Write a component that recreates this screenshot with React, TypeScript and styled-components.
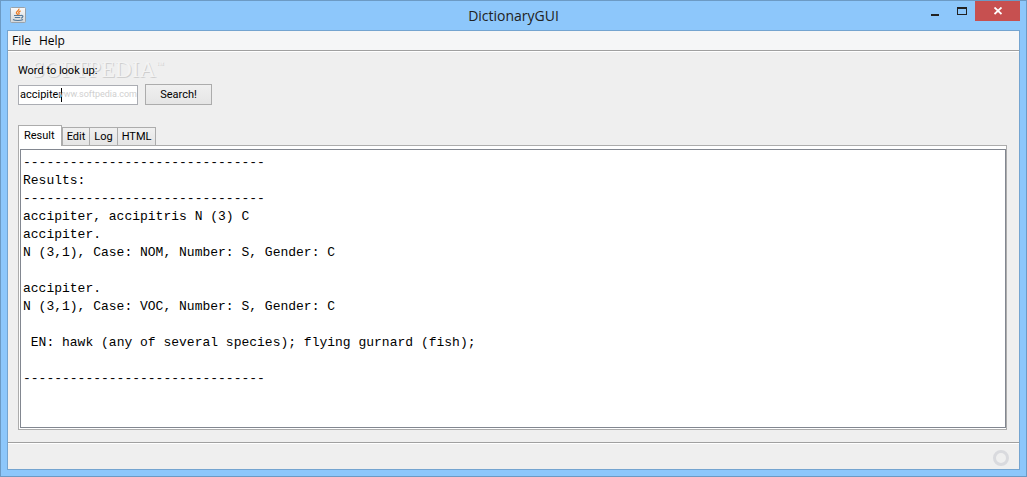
import React, { useState } from "react";
import styled, { createGlobalStyle } from "styled-components";

const titleFont = `"Open Sans", "Noto Sans", sans-serif`;
const controlFont = `Roboto, "Noto Sans", sans-serif`;

const GlobalStyle = createGlobalStyle`
  * { box-sizing: border-box; }
  body { margin: 0; background: #8dc7fb; }
  button, input, textarea { font: inherit; color: inherit; margin: 0; border-radius: 0; outline: none; }
`;

const Window = styled.div`
  display: flex;
  flex-direction: column;
  min-height: 100vh;
  padding: 0 6px 6px;
  border: 1px solid #6c9ac4;
  background: #8dc7fb;
  font: 11px/14px ${controlFont};
  color: #000;
`;

const TitleBar = styled.header`
  display: grid;
  grid-template-columns: 1fr auto 1fr;
  height: 29px;
`;

const AppIcon = styled.svg`
  width: 16px;
  height: 16px;
  margin: 6px 3px;
`;

const Title = styled.h1`
  margin: 0;
  font: 14px/29px ${titleFont};
  color: #222;
`;

const WindowControls = styled.div`
  display: flex;
  justify-content: flex-end;
  align-items: flex-start;
`;

const ControlButton = styled.button<{ $close?: boolean }>`
  display: flex;
  width: ${(p) => (p.$close ? 45 : 27)}px;
  height: 20px;
  padding: 0;
  border: 0;
  align-items: center;
  justify-content: center;
  background: ${(p) => (p.$close ? "#c75050" : "transparent")};
`;

const Frame = styled.div`
  display: flex;
  flex: 1;
  flex-direction: column;
  border: 1px solid #74a4d0;
  background: #efefef;
`;

const MenuBar = styled.nav`
  display: flex;
  gap: 8px;
  height: 20px;
  padding: 0 4px;
  background: #f5f6f7;
  border-bottom: 1px solid #a0a0a0;
  box-shadow: 0 1px #fff;
`;

const MenuItem = styled.button`
  padding: 0;
  border: 0;
  background: none;
  font: 12px/19px ${titleFont};
`;

const Main = styled.main`
  display: flex;
  flex: 1;
  flex-direction: column;
  padding: 13px 12px 12px 10px;
`;

const SearchForm = styled.form`
  position: relative;
  display: flex;
  flex-direction: column;
  align-items: flex-start;
  gap: 6px;
  margin-bottom: 20px;
`;

const FieldLabel = styled.label`
  position: relative;
  z-index: 1;
`;

const SearchRow = styled.div`
  display: flex;
  align-items: center;
  gap: 7px;
`;

const Field = styled.div`
  position: relative;
`;

const WordInput = styled.input`
  display: block;
  width: 120px;
  height: 20px;
  padding: 0 1px;
  border: 1px solid #abadb3;
  background: #fff;
`;

const Caret = styled.span`
  position: absolute;
  top: 3px;
  left: 43px;
  width: 1px;
  height: 14px;
  background: #000;
`;

const SearchButton = styled.button`
  width: 67px;
  height: 21px;
  padding: 0;
  border: 1px solid #acacac;
  background: linear-gradient(#f0f0f0, #e5e5e5);
`;

const Watermark = styled.div`
  position: absolute;
  top: -7px;
  left: 14px;
  font: 23px/26px "Liberation Serif", serif;
  color: #f3f3f3;
  text-shadow: 1px 1px #cfcfcf;
  pointer-events: none;
  white-space: nowrap;

  sup {
    font-size: 8px;
    line-height: 0;
    vertical-align: 10px;
  }
`;

const WatermarkUrl = styled.span`
  position: absolute;
  top: 3px;
  right: 1px;
  font: 9px/13px ${controlFont};
  color: #d0d0d0;
  pointer-events: none;
`;

const TabList = styled.div`
  display: flex;
  align-items: flex-end;
`;

const Tab = styled.button<{ $selected: boolean }>`
  position: relative;
  height: ${(p) => (p.$selected ? 21 : 18)}px;
  padding: ${(p) => (p.$selected ? "0 6px 1px 5px" : "1px 4px 0")};
  border: 1px solid #acacac;
  border-bottom: 0;
  margin-right: ${(p) => (p.$selected ? 0 : -1)}px;
  background: ${(p) => (p.$selected ? "#fff" : "linear-gradient(#f0f0f0, #e5e5e5)")};
  ${(p) => p.$selected && "margin-bottom: -1px; z-index: 1;"}
`;

const TabPanel = styled.div`
  display: flex;
  flex: 1;
  padding: 3px 0 1px 1px;
  border: 1px solid #acacac;
  background: #fff;
`;

const Output = styled.textarea`
  flex: 1;
  min-height: 200px;
  padding: 4px 2px;
  border: 1px solid #828790;
  background: #fff;
  resize: none;
  overflow: hidden;
  font: 13px/18px "Liberation Mono", monospace;
`;

const StatusBar = styled.footer`
  display: flex;
  height: 27px;
  padding: 7px 10px 0;
  justify-content: flex-end;
  border-top: 1px solid #a0a0a0;
  box-shadow: inset 0 1px #fff;
`;

const BusyRing = styled.div`
  width: 16px;
  height: 16px;
  border: 3px solid #d9dade;
  border-radius: 50%;
`;

const rule = "-".repeat(31);
const resultText = [
  rule,
  "Results:",
  rule,
  "accipiter, accipitris N (3) C",
  "accipiter.",
  "N (3,1), Case: NOM, Number: S, Gender: C",
  "",
  "accipiter.",
  "N (3,1), Case: VOC, Number: S, Gender: C",
  "",
  " EN: hawk (any of several species); flying gurnard (fish);",
  "",
  rule,
].join("\n");

const tabs = ["Result", "Edit", "Log", "HTML"];

export default function App() {
  const [word, setWord] = useState("accipiter");
  const [active, setActive] = useState("Result");

  return (
    <>
      <GlobalStyle />
      <Window>
        <TitleBar>
          <AppIcon viewBox="0 0 16 16" aria-hidden="true">
            <defs>
              <linearGradient id="tile" x2="0" y2="1">
                <stop offset="0" stopColor="#fafafa" />
                <stop offset="1" stopColor="#d3d7da" />
              </linearGradient>
            </defs>
            <rect x=".5" y=".5" width="15" height="15" rx="1" fill="url(#tile)" stroke="#98a2ab" />
            <path d="M8.8 1.6C9.8 3.6 5.8 4.2 6.4 6L7.8 7.8M10.6 3.8C8.4 4.8 8.4 5.6 9.1 6.4L8.8 7.6" fill="none" stroke="#ec7a22" strokeWidth="1.3" />
            <path d="M4 8.5h7M4.8 10.5h5.4M11 8.5c2.8-.4 2.2 2.2 0 2.6M3 12.5c2 1.4 8 1.3 10 0" fill="none" stroke="#54799a" strokeWidth="1.2" />
          </AppIcon>
          <Title>DictionaryGUI</Title>
          <WindowControls>
            <ControlButton type="button" aria-label="Minimize">
              <svg width="10" height="10"><path d="M1 8h8v2H1z" fill="#222" /></svg>
            </ControlButton>
            <ControlButton type="button" aria-label="Maximize">
              <svg width="10" height="8"><path d="M0 0h10v8H0zM1 2v5h8V2z" fillRule="evenodd" fill="#222" /></svg>
            </ControlButton>
            <ControlButton type="button" $close aria-label="Close">
              <svg width="8" height="8"><path d="M.5 .5l7 6.5M7.5 .5l-7 6.5" stroke="#fff" strokeWidth="1.8" /></svg>
            </ControlButton>
          </WindowControls>
        </TitleBar>
        <Frame>
          <MenuBar>
            <MenuItem type="button">File</MenuItem>
            <MenuItem type="button">Help</MenuItem>
          </MenuBar>
          <Main>
            <SearchForm onSubmit={(e) => e.preventDefault()}>
              <FieldLabel htmlFor="word">Word to look up:</FieldLabel>
              <Watermark aria-hidden="true">SOFTPEDIA<sup>™</sup></Watermark>
              <SearchRow>
                <Field>
                  <WordInput id="word" value={word} onChange={(e) => setWord(e.target.value)} />
                  <Caret />
                  <WatermarkUrl aria-hidden="true">www.softpedia.com</WatermarkUrl>
                </Field>
                <SearchButton type="submit">Search!</SearchButton>
              </SearchRow>
            </SearchForm>
            <TabList role="tablist">
              {tabs.map((name) => (
                <Tab key={name} type="button" role="tab" aria-selected={active === name} $selected={active === name} onClick={() => setActive(name)}>
                  {name}
                </Tab>
              ))}
            </TabList>
            <TabPanel role="tabpanel">
              <Output readOnly aria-label={active} value={active === "Result" ? resultText : ""} />
            </TabPanel>
          </Main>
          <StatusBar>
            <BusyRing />
          </StatusBar>
        </Frame>
      </Window>
    </>
  );
}
